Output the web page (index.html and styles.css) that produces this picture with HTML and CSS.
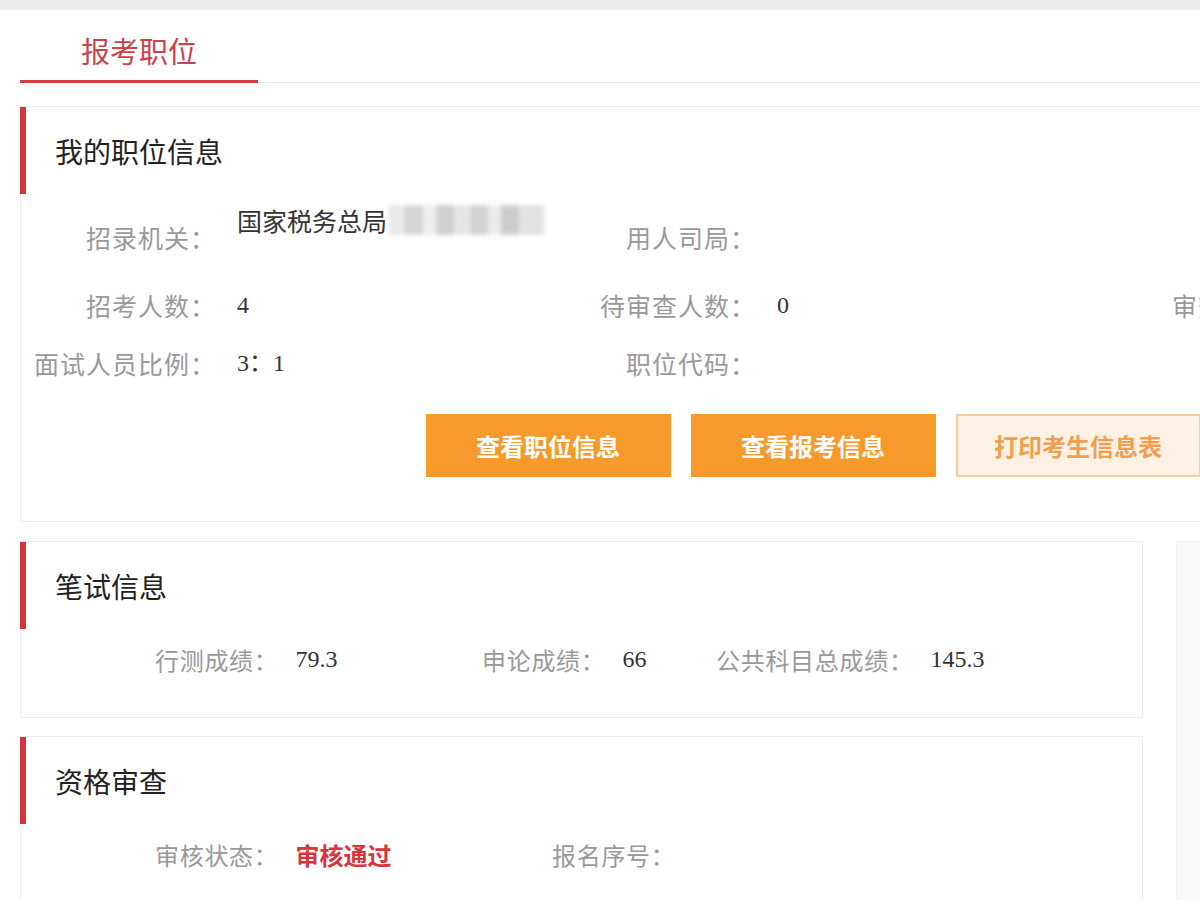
FILE: index.html
```html
<!DOCTYPE html>
<html lang="zh-CN">
<head>
<meta charset="utf-8">
<title>报考职位</title>
<link rel="stylesheet" href="styles.css">
</head>
<body>
<div class="topbar"></div>
<div class="page">
  <div class="tabs">
    <div class="tab active">报考职位</div>
  </div>

  <section class="card card-main">
    <div class="card-head"><h2>我的职位信息</h2></div>
    <div class="info-grid">
      <div class="cell row1">
        <span class="label">招录机关：</span>
        <span class="value stacked">国家税务总局<span class="mosaic"></span></span>
      </div>
      <div class="cell row1">
        <span class="label">用人司局：</span>
        <span class="value"></span>
      </div>
      <div class="cell row1 c3"></div>

      <div class="cell row2">
        <span class="label">招考人数：</span>
        <span class="value num">4</span>
      </div>
      <div class="cell row2">
        <span class="label">待审查人数：</span>
        <span class="value num">0</span>
      </div>
      <div class="cell row2 c3">
        <span class="label free">审查通过人数：</span>
        <span class="value num">0</span>
      </div>

      <div class="cell row3">
        <span class="label">面试人员比例：</span>
        <span class="value num">3：1</span>
      </div>
      <div class="cell row3">
        <span class="label">职位代码：</span>
        <span class="value"></span>
      </div>
      <div class="cell row3 c3"></div>
    </div>
    <div class="actions">
      <button class="btn btn-solid">查看职位信息</button>
      <button class="btn btn-solid">查看报考信息</button>
      <button class="btn btn-light">打印考生信息表</button>
    </div>
  </section>

  <div class="lower">
    <div class="left-col">
      <section class="card">
        <div class="card-head"><h2>笔试信息</h2></div>
        <div class="score-row">
          <div class="item w1"><span class="slabel">行测成绩：</span><span class="svalue num">79.3</span></div>
          <div class="item w2"><span class="slabel">申论成绩：</span><span class="svalue num">66</span></div>
          <div class="item"><span class="slabel">公共科目总成绩：</span><span class="svalue num">145.3</span></div>
        </div>
      </section>
      <section class="card card-last">
        <div class="card-head"><h2>资格审查</h2></div>
        <div class="score-row status-row">
          <div class="item w3"><span class="slabel">审核状态：</span><span class="svalue pass">审核通过</span></div>
          <div class="item"><span class="slabel">报名序号：</span><span class="svalue num"></span></div>
        </div>
      </section>
    </div>
    <aside class="side"></aside>
  </div>
</div>
</body>
</html>
```
FILE: styles.css
```css
html, body {
  margin: 0;
  padding: 0;
  overflow: hidden;
  background: #fff;
}
body {
  width: 1200px;
  height: 900px;
  font-family: "Noto Sans CJK SC", "Noto Sans", sans-serif;
  color: #333;
}
.topbar {
  height: 10px;
  background: #ececec;
}
.page {
  padding-left: 20px;
  width: 1586px;
}
.tabs {
  display: flex;
  border-bottom: 1px solid #e6e6e6;
}
.tab {
  width: 238px;
  box-sizing: border-box;
  text-align: center;
  font-size: 29px;
  color: #c9434b;
  line-height: 60px;
  padding-top: 10px;
}
.tab.active {
  border-bottom: 3px solid #d63a41;
  margin-bottom: -1px;
}

.card {
  border: 1px solid #ececec;
  background: #fff;
}
.card-main {
  margin-top: 23px;
  padding-bottom: 44px;
}
.card-head {
  height: 87px;
  display: flex;
  align-items: center;
  border-left: 6px solid #d7343d;
  margin-left: -1px;
  padding-left: 29px;
}
.card-head h2 {
  margin: 0;
  font-size: 28px;
  font-weight: 400;
  color: #222;
}

.info-grid {
  display: grid;
  grid-template-columns: 540px 540px 1fr;
  grid-template-rows: 68px 68px 48px;
  padding-top: 9px;
}
.cell {
  display: flex;
  align-items: center;
}
.cell.c3 {
  padding-left: 71px;
}
.label {
  width: 195px;
  flex: none;
  text-align: right;
  font-size: 25px;
  letter-spacing: 1px;
  color: #999;
  white-space: nowrap;
}
.label.free {
  width: auto;
  text-align: left;
}
.value {
  margin-left: 21px;
  font-size: 25px;
  color: #333;
  line-height: 34px;
  white-space: nowrap;
}
.value.stacked {
  align-self: flex-start;
}
.num {
  font-family: "Liberation Serif", "Noto Sans CJK SC", serif;
  font-size: 24px;
}
.mosaic {
  display: inline-block;
  vertical-align: -4px;
  width: 155px;
  height: 30px;
  margin-left: 2px;
  background:
    linear-gradient(90deg, #e6e6e6 0 10%, #cfcfcf 10% 22%, #ececec 22% 30%, #c8c8c8 30% 42%, #e2e2e2 42% 52%, #cdcdcd 52% 64%, #e8e8e8 64% 72%, #c4c4c4 72% 84%, #dedede 84% 100%);
  filter: blur(2px);
  opacity: 0.85;
}

.actions {
  display: flex;
  justify-content: center;
  gap: 20px;
  margin-top: 27px;
}
.btn {
  width: 245px;
  height: 63px;
  border: none;
  font-family: "Noto Sans CJK SC", sans-serif;
  font-size: 24px;
  font-weight: 700;
  cursor: pointer;
  padding: 0;
}
.btn-solid {
  background: #f89a2b;
  color: #fff;
}
.btn-light {
  background: #fdf1e3;
  border: 2px solid #f6cd9d;
  color: #f09f50;
}

.lower {
  display: flex;
  gap: 33px;
  margin-top: 19px;
}
.left-col {
  width: 1123px;
  flex: none;
  display: flex;
  flex-direction: column;
  gap: 18px;
}
.side {
  flex: 1;
  height: 400px;
  background: #fafafa;
  border: 1px solid #f0f0f0;
}
.score-row {
  display: flex;
  align-items: center;
  height: 40px;
  padding: 10px 0 38px 134px;
}
.status-row {
  padding-top: 10px;
}
.item {
  display: flex;
  align-items: center;
  flex: none;
}
.item.w1 { width: 327px; }
.item.w2 { width: 234px; }
.item.w3 { width: 397px; }
.slabel {
  font-size: 24px;
  letter-spacing: 0.7px;
  color: #999;
  white-space: nowrap;
}
.svalue {
  margin-left: 17px;
  color: #333;
  white-space: nowrap;
}
.pass {
  font-size: 24px;
  font-weight: 700;
  color: #d7343d;
}
```
